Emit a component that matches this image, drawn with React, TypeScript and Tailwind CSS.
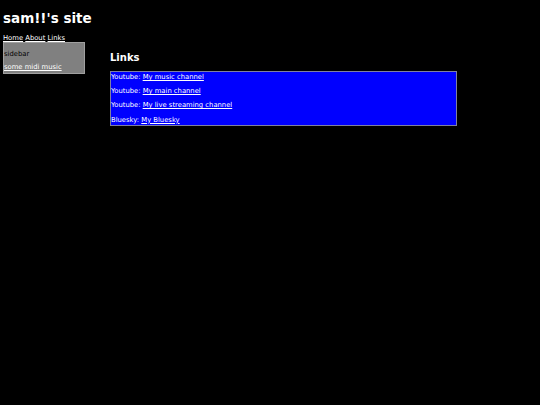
export default function App() {
  const links = [
    { label: 'Youtube:', text: 'My music channel' },
    { label: 'Youtube:', text: 'My main channel' },
    { label: 'Youtube:', text: 'My live streaming channel' },
    { label: 'Bluesky:', text: 'My Bluesky' },
  ]

  return (
    <div className="min-h-screen w-[540px] h-[405px] bg-black text-white font-['DejaVu_Sans',sans-serif] overflow-hidden">
      <h1 className="px-[3px] pt-[9px] text-[13.5px] font-bold leading-[18px]">sam!!'s site</h1>

      <nav className="px-[3px] mt-[7px] text-[6.8px] leading-[8px]">
        <a className="underline decoration-1">Home</a> <a className="underline decoration-1">About</a>{' '}
        <a className="underline decoration-1">Links</a>
      </nav>

      <div className="flex px-[3px]">
        <aside className="w-[82px] h-[32px] bg-[#808080] border border-[#a0a0a0] text-[6.8px] flex flex-col justify-between pt-[6px] pb-[1px]">
          <span className="text-black">sidebar</span>
          <a className="underline decoration-1 text-white">some midi music</a>
        </aside>

        <main className="ml-[25px] mt-[9px] w-[347px]">
          <h2 className="text-[10px] font-bold leading-[14px]">Links</h2>
          <div className="mt-[6px] bg-[#0000ff] border border-[#8080a0] text-[6.8px] leading-[9px] flex flex-col gap-[5.2px] pt-[1px]">
            {links.map((l) => (
              <div key={l.text}>
                {l.label} <a className="underline decoration-1">{l.text}</a>
              </div>
            ))}
          </div>
        </main>
      </div>
    </div>
  )
}
